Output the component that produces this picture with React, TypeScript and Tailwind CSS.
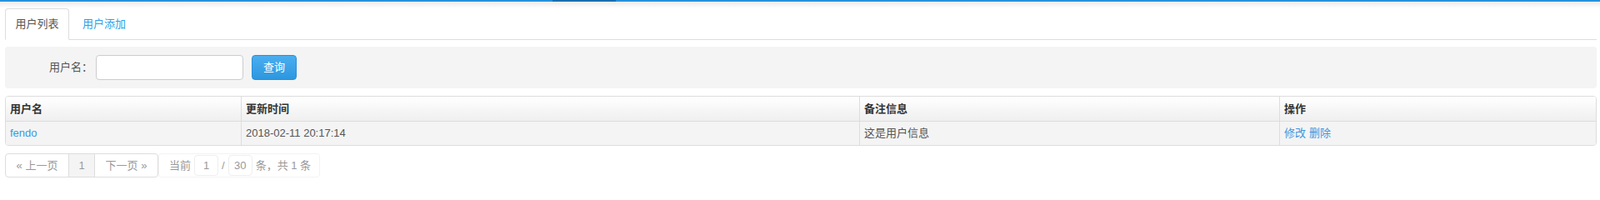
import React from "react";

const columns = ["用户名", "更新时间", "备注信息", "操作"];

export default function App() {
  return (
    <div
      className="min-h-[220px] bg-white text-[13px] text-[#555]"
      style={{ fontFamily: '"Liberation Sans", "Noto Sans CJK SC", sans-serif' }}
    >
      {/* top bar */}
      <div className="flex h-[2px] bg-[#2792dd]">
        <div className="w-[663px]" />
        <div className="w-[76px] bg-[#1b6fae]" />
      </div>
      <div className="h-[8px] bg-gradient-to-b from-[#ececec] to-white" />

      <div className="pl-[6px] pr-[4px]">
        {/* tabs */}
        <div className="flex h-[38px] border-b border-[#ddd]">
          <div className="-mb-px flex w-[77px] items-center justify-center rounded-t-[4px] border border-[#ddd] border-b-white bg-white text-[#555]">
            用户列表
          </div>
          <div className="flex items-center px-[16px] text-[#2e9fe6]">用户添加</div>
        </div>

        {/* search */}
        <div className="mt-[8px] flex h-[50px] items-center rounded-[4px] bg-[#f4f4f4] pl-[53px]">
          <span className="text-[#555]">用户名：</span>
          <input className="ml-[4px] h-[30px] w-[177px] rounded-[4px] border border-[#ccc] bg-white px-2 outline-none" />
          <button className="ml-[10px] h-[30px] w-[54px] rounded-[4px] border border-[#2a8fd6] bg-gradient-to-b from-[#4aaef0] to-[#2b97e0] text-white">
            查询
          </button>
        </div>

        {/* table */}
        <div className="mt-[9px] overflow-hidden rounded-[4px] border border-[#ddd]">
          <div className="grid h-[29px] grid-cols-[282px_742px_504px_1fr] bg-gradient-to-b from-white to-[#efefef] font-bold text-[#333]">
            {columns.map((c, i) => (
              <div
                key={c}
                className={`flex items-center px-[5px] ${i > 0 ? "border-l border-[#ddd]" : ""}`}
              >
                {c}
              </div>
            ))}
          </div>
          <div className="grid h-[29px] grid-cols-[282px_742px_504px_1fr] border-t border-[#ddd] bg-[#f4f4f4]">
            <div className="flex items-center px-[5px] text-[#3a97e0]">fendo</div>
            <div className="flex items-center border-l border-[#ddd] px-[5px]">2018-02-11 20:17:14</div>
            <div className="flex items-center border-l border-[#ddd] px-[5px]">这是用户信息</div>
            <div className="flex items-center gap-[4px] border-l border-[#ddd] px-[5px] text-[#3a97e0]">
              <span>修改</span>
              <span>删除</span>
            </div>
          </div>
        </div>

        {/* pagination */}
        <div className="mt-[9px] flex">
          <div className="flex h-[29px] rounded-[4px] border border-[#ddd] text-[#999]">
            <div className="flex w-[75px] items-center justify-center">« 上一页</div>
            <div className="flex w-[32px] items-center justify-center border-x border-[#ddd] bg-[#f4f4f4]">1</div>
            <div className="flex w-[75px] items-center justify-center">下一页 »</div>
          </div>
          <div className="flex h-[29px] items-center rounded-[4px] border border-[#f3f3f3] pl-[12px] pr-[10px] text-[#999]">
            <span>当前</span>
            <div className="ml-[4px] flex h-[25px] w-[29px] items-center justify-center rounded-[4px] border border-[#eee]">
              1
            </div>
            <span className="mx-[4px]">/</span>
            <div className="flex h-[25px] w-[29px] items-center justify-center rounded-[4px] border border-[#eee]">
              30
            </div>
            <span className="ml-[4px]">条，共 1 条</span>
          </div>
        </div>
      </div>
    </div>
  );
}
